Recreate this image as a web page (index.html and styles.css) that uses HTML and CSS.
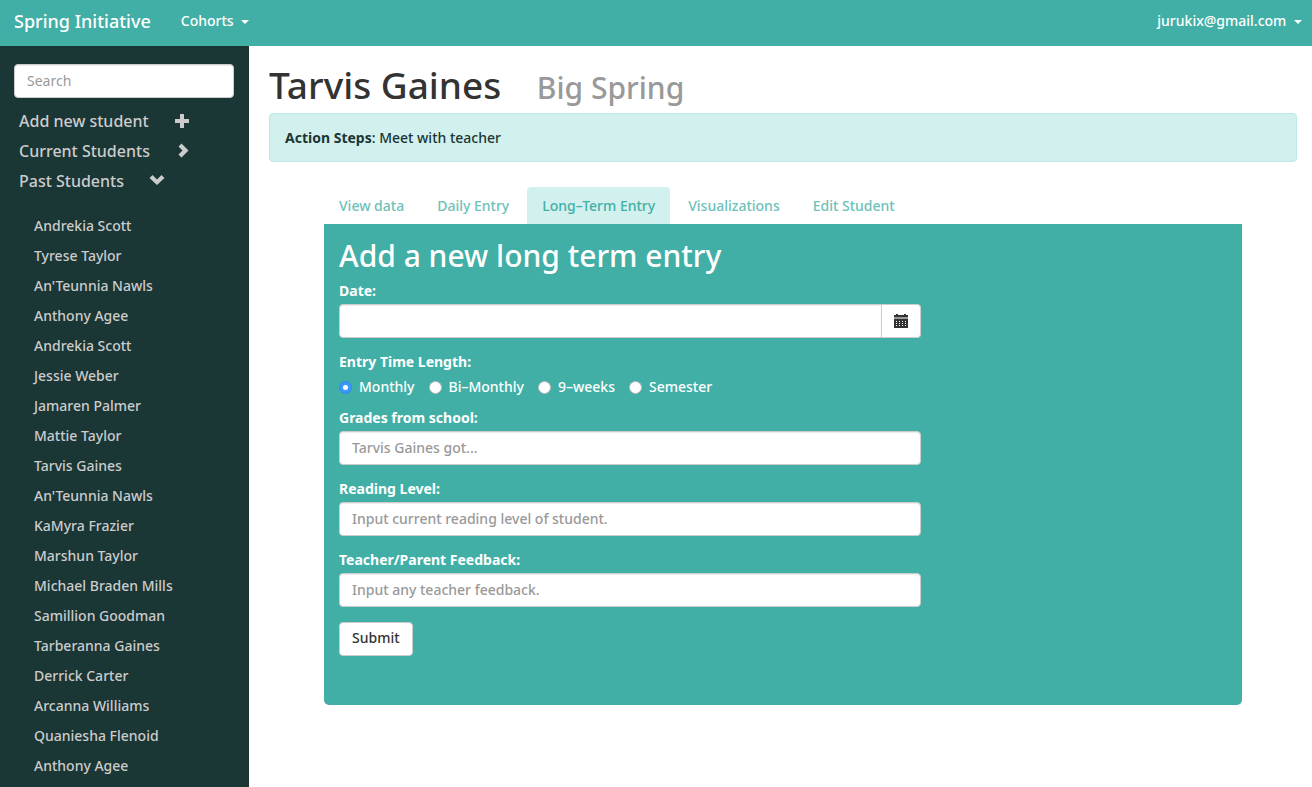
FILE: index.html
```html
<!DOCTYPE html>
<html lang="en">
<head>
<meta charset="utf-8">
<title>Spring Initiative</title>
<link rel="stylesheet" href="styles.css">
</head>
<body>
<header class="navbar">
  <a class="brand" href="#">Spring Initiative</a>
  <a class="nav-link" href="#">Cohorts <span class="caret"></span></a>
  <a class="nav-link account" href="#">jurukix@gmail.com <span class="caret"></span></a>
</header>
<div class="layout">
  <aside class="sidebar">
    <input class="control search" type="text" placeholder="Search" aria-label="Search">
    <nav class="groups">
      <a href="#">Add new student <svg class="icon" viewBox="0 0 16 16"><path d="M6 1h4v5h5v4h-5v5H6v-5H1V6h5z"/></svg></a>
      <a href="#">Current Students <svg class="icon" viewBox="0 0 16 16"><path d="M6.500 .5 13.500 7.500 6.500 14.500 3.500 11.500 7.500 7.500 3.500 3.500z"/></svg></a>
      <a href="#">Past Students <svg class="icon" viewBox="0 0 16 16"><path d="M.5 5 3.500 2 8 6.500 12.500 2 15.500 5 8 12z"/></svg></a>
    </nav>
    <ul class="students">
      <li><a href="#">Andrekia Scott</a></li>
      <li><a href="#">Tyrese Taylor</a></li>
      <li><a href="#">An'Teunnia Nawls</a></li>
      <li><a href="#">Anthony Agee</a></li>
      <li><a href="#">Andrekia Scott</a></li>
      <li><a href="#">Jessie Weber</a></li>
      <li><a href="#">Jamaren Palmer</a></li>
      <li><a href="#">Mattie Taylor</a></li>
      <li><a href="#">Tarvis Gaines</a></li>
      <li><a href="#">An'Teunnia Nawls</a></li>
      <li><a href="#">KaMyra Frazier</a></li>
      <li><a href="#">Marshun Taylor</a></li>
      <li><a href="#">Michael Braden Mills</a></li>
      <li><a href="#">Samillion Goodman</a></li>
      <li><a href="#">Tarberanna Gaines</a></li>
      <li><a href="#">Derrick Carter</a></li>
      <li><a href="#">Arcanna Williams</a></li>
      <li><a href="#">Quaniesha Flenoid</a></li>
      <li><a href="#">Anthony Agee</a></li>
    </ul>
  </aside>
  <main class="content">
    <h1 class="title">Tarvis Gaines <small>Big Spring</small></h1>
    <div class="alert"><strong>Action Steps</strong>: Meet with teacher</div>
    <div class="entry">
      <nav class="tabs">
        <a href="#">View data</a>
        <a href="#">Daily Entry</a>
        <a class="active" href="#">Long–Term Entry</a>
        <a href="#">Visualizations</a>
        <a href="#">Edit Student</a>
      </nav>
      <div class="panel">
        <h2 class="panel-title">Add a new long term entry</h2>
        <form class="form">
          <div class="field">
            <label for="date">Date:</label>
            <div class="input-group">
              <input class="control" id="date" type="text">
              <button class="addon" type="button" aria-label="Pick a date">
                <svg class="calendar" viewBox="0 0 14 14"><path d="M2 0h2v1h6V0h2v1h2v2H0V1h2z"/><path fill="#999" d="M0 3h14v2H0z"/><path fill-rule="evenodd" d="M0 5h14v9H0zM2 7v1h1V7zm3 0v1h1V7zm3 0v1h1V7zm3 0v1h1V7zM2 9v1h1V9zm3 0v1h1V9zm3 0v1h1V9zm3 0v1h1V9zM2 11v1h1v-1zm3 0v1h1v-1zm3 0v1h1v-1zm3 0v1h1v-1z"/></svg>
              </button>
            </div>
          </div>
          <fieldset class="field options">
            <legend>Entry Time Length:</legend>
            <div class="radios">
              <label><input type="radio" name="length" checked>Monthly</label>
              <label><input type="radio" name="length">Bi–Monthly</label>
              <label><input type="radio" name="length">9–weeks</label>
              <label><input type="radio" name="length">Semester</label>
            </div>
          </fieldset>
          <div class="field">
            <label for="grades">Grades from school:</label>
            <input class="control" id="grades" type="text" placeholder="Tarvis Gaines got...">
          </div>
          <div class="field">
            <label for="reading">Reading Level:</label>
            <input class="control" id="reading" type="text" placeholder="Input current reading level of student.">
          </div>
          <div class="field">
            <label for="feedback">Teacher/Parent Feedback:</label>
            <input class="control" id="feedback" type="text" placeholder="Input any teacher feedback.">
          </div>
          <button class="submit" type="submit">Submit</button>
        </form>
      </div>
    </div>
  </main>
</div>
</body>
</html>
```
FILE: styles.css
```css
* { box-sizing: border-box; }
html { height: 100%; overflow: hidden; }
body {
  margin: 0;
  height: 100%;
  display: flex;
  flex-direction: column;
  font: 500 14px/20px "Noto Sans", "Open Sans", sans-serif;
  color: #333;
  background: #fff;
}
a { text-decoration: none; color: inherit; }
input, button { font: inherit; }

.navbar {
  display: flex;
  align-items: center;
  flex: none;
  height: 46px;
  padding: 0 10px 4px 14px;
  background: #41afa6;
  color: #fff;
}
.brand { font-size: 18px; margin-right: 30px; }
.account { margin-left: auto; }
.caret {
  display: inline-block;
  margin-left: 4px;
  vertical-align: middle;
  border: 4px solid transparent;
  border-top-color: currentColor;
  border-bottom: 0;
}

.layout { display: flex; flex: 1; min-height: 0; }
.sidebar {
  flex: none;
  width: 249px;
  padding: 18px 15px 0 14px;
  background: #1a3635;
  color: #ccc;
  overflow: hidden;
}
.control {
  display: block;
  width: 100%;
  height: 34px;
  padding: 5px 12px 7px;
  border: 1px solid #ccc;
  border-radius: 4px;
  background: #fff;
  color: #555;
  box-shadow: inset 0 1px 1px rgba(0, 0, 0, .075);
}
.search { font-weight: 400; }
.control::placeholder { color: #999; opacity: 1; }
.groups { padding: 8px 5px 0; font-size: 16px; line-height: 30px; }
.groups a { display: flex; align-items: center; gap: 25px; }
.icon { width: 16px; height: 16px; fill: #ccc; }
.students {
  list-style: none;
  margin: 0;
  padding: 15px 0 0 20px;
  line-height: 30px;
}

.content { flex: 1; min-width: 0; padding: 20px 15px 0 20px; }
.title {
  margin: 0 0 9px;
  font-size: 37px;
  font-weight: 500;
  line-height: 38px;
}
.title small { margin-left: 26px; font-size: 30px; line-height: 30px; color: #999; }
.alert {
  padding: 14px 15px 13px;
  border: 1px solid #bce8e6;
  border-radius: 4px;
  background: #d2f0ee;
  color: #1a3635;
}
.entry { margin: 25px 55px 0; }
.tabs { display: flex; gap: 3px; }
.tabs a {
  padding: 9px 15px 8px;
  border-radius: 4px 4px 0 0;
  color: #6cc1b9;
}
.tabs .active { background: #d2f0ee; color: #41afa6; }
.panel {
  padding: 15px 0 49px;
  border-radius: 0 0 5px 5px;
  background: #41afa6;
  color: #fff;
}
.panel-title {
  margin: 0 15px 8px;
  font-size: 30px;
  font-weight: 500;
  line-height: 34px;
}
.form { width: 66.667%; padding: 0 15px; }
.field { margin: 0 0 14px; padding: 0; border: 0; }
.options { margin-bottom: 10px; }
.field > label, legend {
  display: block;
  padding: 0;
  margin-bottom: 3px;
  font-weight: 700;
}
.input-group { display: flex; }
.input-group .control { border-radius: 4px 0 0 4px; }
.addon {
  flex: none;
  width: 39px;
  padding: 0;
  border: 1px solid #ccc;
  border-left: 0;
  border-radius: 0 4px 4px 0;
  background: #fff;
}
.calendar { display: block; width: 14px; height: 14px; margin: 0 auto; fill: #333; }
.radios { display: flex; gap: 14px; }
.radios label { display: flex; align-items: center; gap: 7px; height: 23px; }
.radios input {
  appearance: none;
  width: 13px;
  height: 13px;
  margin: 2px 0 0;
  border: 1px solid #bbb;
  border-radius: 50%;
  background: #fff;
}
.radios input:checked {
  border-color: #2f86ee;
  background: radial-gradient(circle, #fff 2px, #3b99fc 3px);
}
.submit {
  display: block;
  height: 34px;
  margin-top: 15px;
  padding: 5px 12px 7px;
  border: 1px solid #ccc;
  border-radius: 4px;
  background: #fff;
  color: #333;
}
```
